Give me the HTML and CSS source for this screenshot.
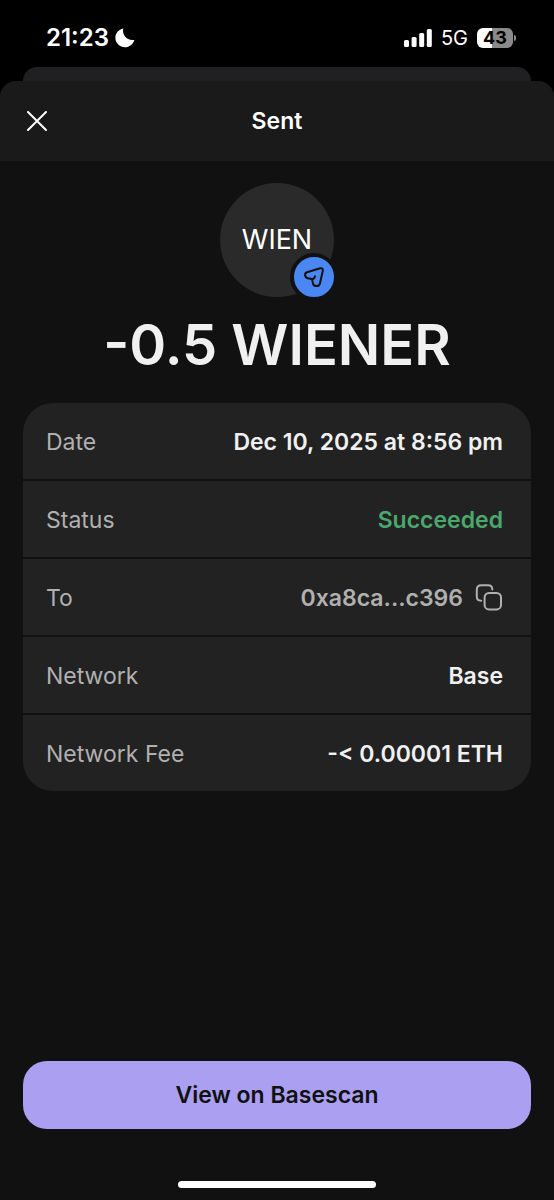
FILE: index.html
```html
<!DOCTYPE html>
<html lang="en">
<head>
    <meta charset="UTF-8">
    <meta name="viewport" content="width=device-width, initial-scale=1.0">
    <title>Sent</title>
    <link rel="stylesheet" href="styles.css">
</head>
<body>
    <div class="status-bar">
        <div class="status-left">
            <span class="time">21:23</span>
            <svg class="moon" viewBox="0 0 20 20" width="20" height="20" aria-hidden="true">
                <path d="M8.2 0.6C6.900 7.400 12.200 13.200 19.400 11.900C18 16.200 14.400 19.200 10 19.200C4.700 19.200 0.400 15 0.400 9.800C0.400 5.400 3.600 1.700 8.200 0.600Z" fill="#fff"/>
            </svg>
        </div>
        <div class="status-right">
            <svg class="signal" viewBox="0 0 28 18" width="28" height="18" aria-hidden="true">
                <rect x="0" y="11" width="5" height="7" rx="1.5" fill="#fff"/>
                <rect x="7.600" y="8" width="5" height="10" rx="1.500" fill="#fff"/>
                <rect x="15.200" y="4" width="5" height="14" rx="1.500" fill="#fff"/>
                <rect x="22.800" y="0" width="5" height="18" rx="1.500" fill="#fff"/>
            </svg>
            <span class="carrier">5G</span>
            <div class="battery">
                <span class="battery-level">43</span>
                <span class="battery-tip"></span>
            </div>
        </div>
    </div>

    <div class="back-sheet"></div>

    <main class="sheet">
        <header class="header">
            <button class="close" type="button" aria-label="Close">
                <svg viewBox="0 0 20 20" width="20" height="20" aria-hidden="true">
                    <path d="M1 1L19 19M19 1L1 19" stroke="#fff" stroke-width="2" stroke-linecap="round"/>
                </svg>
            </button>
            <h1 class="title">Sent</h1>
        </header>

        <section class="summary">
            <div class="token">
                <span>WIEN</span>
                <div class="badge">
                    <svg viewBox="0 0 40 40" width="40" height="40" fill="none" aria-hidden="true">
                        <path d="M13 15.200L26.200 11.300C28 10.800 29.200 12 28.800 13.700L26 26.200C25.200 29.900 20.200 30.100 19 26.600C18.500 25 18.800 23.200 17.700 22.300C16.600 21.400 15.200 21.700 13.600 21.200C10.400 20.200 10.200 16.100 13 15.200ZM17.700 22.300C19.300 22.200 20.600 20.900 21 19.200" stroke="#111" stroke-width="2" stroke-linecap="round" stroke-linejoin="round"/>
                    </svg>
                </div>
            </div>
            <p class="amount">-0.5 WIENER</p>
        </section>

        <dl class="details">
            <div class="row">
                <dt>Date</dt>
                <dd>Dec 10, 2025 at 8:56 pm</dd>
            </div>
            <div class="row">
                <dt>Status</dt>
                <dd class="success">Succeeded</dd>
            </div>
            <div class="row">
                <dt>To</dt>
                <dd class="address">
                    0xa8ca...c396
                    <button class="copy" type="button" aria-label="Copy address">
                        <svg viewBox="0 0 28 28" width="28" height="28" fill="none" aria-hidden="true">
                            <path d="M6.200 16.800C3.200 16.800 1.800 15.600 1.800 12.600V5.800C1.800 2.600 3.200 1.200 6.200 1.200H13C16 1.200 17.300 2.600 17.300 5.400" stroke="#b0b0b0" stroke-width="2" stroke-linecap="round"/>
                            <rect x="9.600" y="9" width="16.400" height="16.400" rx="4.500" stroke="#b0b0b0" stroke-width="2"/>
                        </svg>
                    </button>
                </dd>
            </div>
            <div class="row">
                <dt>Network</dt>
                <dd>Base</dd>
            </div>
            <div class="row">
                <dt>Network Fee</dt>
                <dd>-&lt; 0.00001 ETH</dd>
            </div>
        </dl>

        <footer class="footer">
            <button class="explorer" type="button">View on Basescan</button>
            <div class="home-bar"></div>
        </footer>
    </main>
</body>
</html>
```
FILE: styles.css
```css
* {
    box-sizing: border-box;
}

body {
    display: flex;
    flex-direction: column;
    min-height: 100vh;
    margin: 0;
    background-color: #000000;
    color: #f0f0f0;
    font-family: Inter, "Liberation Sans", sans-serif;
    font-size: 23px;
    line-height: 28px;
}

button {
    padding: 0;
    border: none;
    background: none;
    font: inherit;
    cursor: pointer;
}

svg {
    display: block;
}

/* status bar */
.status-bar {
    display: flex;
    justify-content: space-between;
    height: 67px;
    padding: 8px 38px 0 46px;
    color: #ffffff;
}

.status-left,
.status-right {
    display: flex;
    align-items: center;
}

.status-left {
    gap: 6px;
}

.status-right {
    gap: 9px;
}

.time {
    font-size: 24px;
    font-weight: 600;
}

.carrier {
    font-size: 20px;
}

.battery {
    display: flex;
    align-items: center;
    gap: 1px;
}

.battery-level {
    width: 36px;
    height: 20px;
    border-radius: 6px;
    background: linear-gradient(to right, #ffffff 43%, #8a8a8a 43%);
    color: #000000;
    font-size: 18px;
    font-weight: 700;
    line-height: 20px;
    text-align: center;
}

.battery-tip {
    width: 2px;
    height: 6px;
    border-radius: 0 2px 2px 0;
    background-color: #8a8a8a;
}

/* sheets */
.back-sheet {
    height: 28px;
    margin: 0 23px -14px;
    border-radius: 14px 14px 0 0;
    background-color: #202022;
}

.sheet {
    display: flex;
    flex: 1;
    flex-direction: column;
    border-radius: 16px 16px 0 0;
    background-color: #111111;
}

.header {
    display: grid;
    grid-template-columns: 40px 1fr 40px;
    align-items: center;
    height: 80px;
    padding: 0 17px;
    border-radius: 16px 16px 0 0;
    background-color: #1a1a1a;
}

.close {
    display: flex;
    align-items: center;
    justify-content: center;
    height: 40px;
}

.title {
    margin: 0;
    color: #ffffff;
    font-size: 23px;
    font-weight: 600;
    text-align: center;
}

/* amount */
.summary {
    display: flex;
    flex-direction: column;
    align-items: center;
    padding-top: 22px;
}

.token {
    display: flex;
    position: relative;
    align-items: center;
    justify-content: center;
    width: 114px;
    height: 114px;
    border-radius: 50%;
    background-color: #2a2a2a;
    color: #ffffff;
    font-size: 27px;
}

.badge {
    position: absolute;
    right: -4px;
    bottom: -4px;
    border: 4px solid #111111;
    border-radius: 50%;
    background-color: #4a87f2;
}

.amount {
    margin: 12px 0 22px;
    font-size: 56px;
    font-weight: 600;
    line-height: 72px;
}

/* details */
.details {
    display: flex;
    flex-direction: column;
    gap: 2px;
    margin: 0 23px;
    overflow: hidden;
    border-radius: 30px;
}

.row {
    display: flex;
    align-items: center;
    justify-content: space-between;
    height: 76px;
    padding: 2px 28px 0 23px;
    background-color: #222222;
}

.row dt {
    color: #b0b0b0;
}

.row dd {
    margin: 0;
    font-weight: 600;
}

.row .success {
    color: #4aa86c;
}

.row .address {
    display: flex;
    align-items: center;
    gap: 12px;
    color: #b0b0b0;
}

/* footer */
.footer {
    display: flex;
    flex-direction: column;
    align-items: center;
    gap: 52px;
    margin-top: auto;
    padding: 24px 23px 12px;
}

.explorer {
    width: 100%;
    height: 68px;
    border-radius: 24px;
    background-color: #ab9ff2;
    color: #111111;
    font-weight: 600;
}

.home-bar {
    width: 39%;
    height: 7px;
    border-radius: 4px;
    background-color: #ffffff;
}
```
